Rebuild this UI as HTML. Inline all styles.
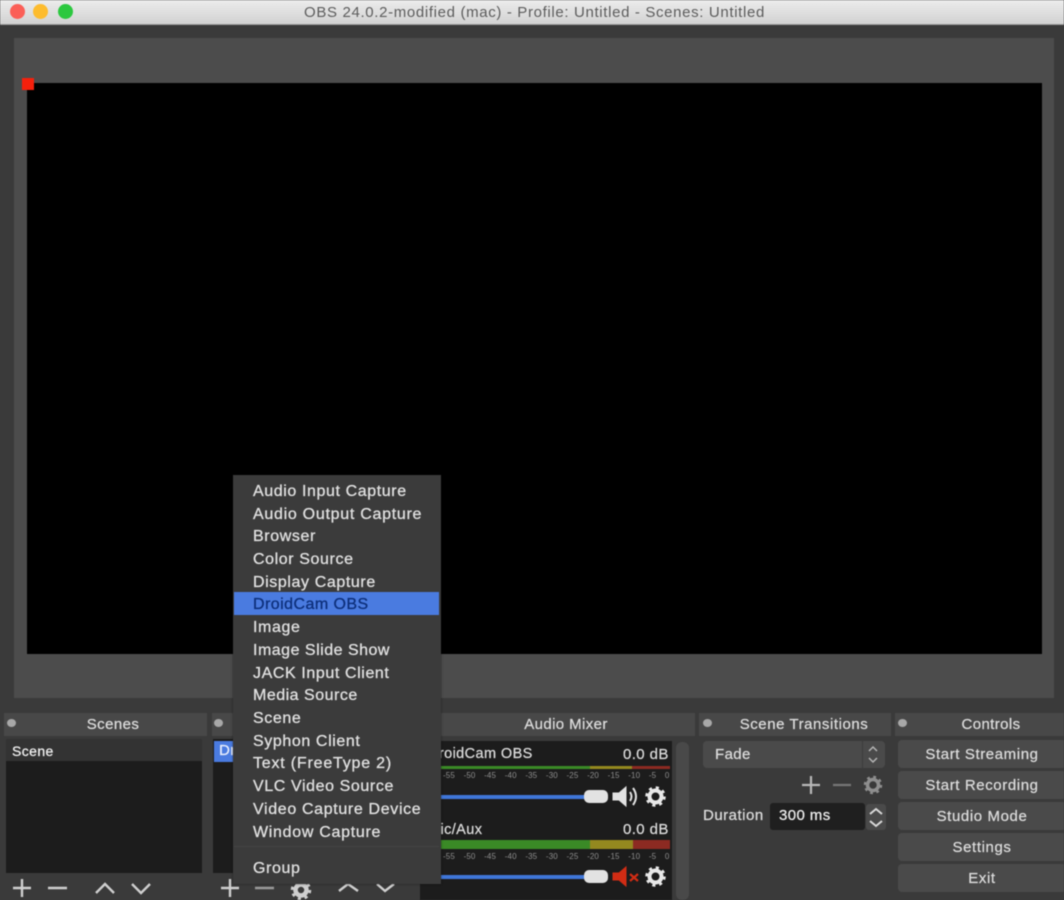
<!DOCTYPE html>
<html><head><meta charset="utf-8"><style>
html,body{margin:0;padding:0;background:#3a3a3a}
#r{position:relative;width:1064px;height:900px;overflow:hidden;background:#3a3a3a;font-family:"Liberation Sans",sans-serif;color:#dcdcdc;font-size:16px;filter:blur(.5px)}
#r div,#r span.t{position:absolute}
.t{white-space:nowrap;line-height:20px;letter-spacing:.4px;-webkit-text-stroke:.25px currentColor}
.c{text-align:center}
.dock{background:#484848;top:713px;height:23px}
.list{background:#1c1c1c}
.btn{left:898px;width:168px;height:28px;background:#4a4a4a;border-radius:4px;text-align:center;line-height:30px;letter-spacing:.6px;-webkit-text-stroke:.25px currentColor}
.dot{width:15px;height:15px;border-radius:50%;top:4px}
.m{left:253px;white-space:nowrap;line-height:20px;letter-spacing:.6px;color:#e0e0e0;-webkit-text-stroke:.3px currentColor}
svg{position:absolute;overflow:visible}
.s{-webkit-text-stroke:0;font-size:8px;line-height:11px;letter-spacing:.1px;word-spacing:6.4px;color:#8c8c8c;left:443px;width:232px}
</style></head><body><div id="r">
<div style="left:0;top:0;width:1064px;height:24px;background:linear-gradient(#ececec,#d2d2d2);border-bottom:1px solid #9a9a9a"></div>
<div class="dot" style="left:10px;background:#fb5f57"></div>
<div class="dot" style="left:33px;background:#fdbc2e"></div>
<div class="dot" style="left:58px;background:#2bc83f"></div>
<div class="t c" style="left:0;width:1069px;top:3px;color:#5c5c5c;font-size:15px;letter-spacing:.65px;-webkit-text-stroke:0">OBS 24.0.2-modified (mac) - Profile: Untitled - Scenes: Untitled</div>

<div style="left:14px;top:38px;width:1040px;height:660px;background:#4c4c4c"></div>
<div style="left:27px;top:83px;width:1015px;height:571px;background:#000"></div>
<div style="left:22px;top:78px;width:12px;height:12px;background:#f5200c"></div>

<div class="dock" style="left:4px;width:203px"></div>
<div class="dock" style="left:212px;width:200px"></div>
<div class="dock" style="left:420px;width:275px"></div>
<div class="dock" style="left:699px;width:192px"></div>
<div class="dock" style="left:895px;width:169px"></div>
<div style="left:7px;top:719px;width:9px;height:8px;border-radius:50%;background:#a8a8a8"></div>
<div style="left:214px;top:719px;width:9px;height:8px;border-radius:50%;background:#a8a8a8"></div>
<div style="left:703px;top:719px;width:9px;height:8px;border-radius:50%;background:#a8a8a8"></div>
<div style="left:898px;top:719px;width:9px;height:8px;border-radius:50%;background:#a8a8a8"></div>
<div class="t c" style="left:4px;width:218px;top:715px;font-size:15px">Scenes</div>
<div class="t c" style="left:420px;width:292px;top:715px;font-size:15px">Audio Mixer</div>
<div class="t c" style="left:699px;width:210px;top:715px;font-size:15px;letter-spacing:.55px">Scene Transitions</div>
<div class="t c" style="left:895px;width:192px;top:715px;font-size:15px">Controls</div>

<div class="list" style="left:6px;top:739px;width:196px;height:134px"></div>
<div style="left:6px;top:739px;width:196px;height:22px;background:#333"></div>
<div class="t" style="left:12px;top:741px;font-size:14px;color:#f2f2f2">Scene</div>
<div class="list" style="left:213px;top:739px;width:195px;height:134px"></div>
<div style="left:214px;top:741px;width:22px;height:21px;background:#4a7be0"></div>
<div class="t" style="left:219px;top:741px;font-size:15px;color:#e8eefc">Dr</div>

<svg style="left:0;top:873px" width="420" height="27" fill="none" stroke="#cfcfcf" stroke-width="2.4">
<path d="M22 6V24M13 15H31M48 15H67M96 20L105 11L114 20M132 11L141 20L150 11"/>
<path d="M230 6V24M221 15H239"/>
<path d="M255 15H274" stroke="#9a9a9a"/>
<path d="M339 18L348 11L358 18M377 11L385 18L394 11"/>
<circle cx="301" cy="17" r="5.500" stroke-width="4.500"/>
<circle cx="301" cy="17" r="8.500" stroke-width="3.500" stroke-dasharray="3 3.670"/>
</svg>

<!-- audio mixer -->
<div class="list" style="left:420px;top:741px;width:252px;height:159px"></div>
<div style="left:676px;top:742px;width:13px;height:158px;border-radius:6px;background:#494949"></div>
<div class="t" style="left:428px;top:744px;font-size:14.5px">DroidCam OBS</div>
<div class="t" style="left:623px;top:745px;font-size:15px">0.0 dB</div>
<div style="left:440px;top:766px;width:150px;height:3px;background:#3a8a26"></div>
<div style="left:590px;top:766px;width:42px;height:3px;background:#94891f"></div>
<div style="left:632px;top:766px;width:38px;height:3px;background:#8c2a22"></div>
<div class="t s" style="top:770px">-55 -50 -45 -40 -35 -30 -25 -20 -15 -10 -5 0</div>
<div style="left:440px;top:795px;width:150px;height:4px;background:#3f76d8"></div>
<div style="left:584px;top:790px;width:24px;height:13px;border-radius:5px;background:#e2e2e2"></div>
<svg style="left:612px;top:785px" width="28" height="24" fill="#e2e2e2" stroke="#e2e2e2">
<path d="M1 8H7L14 2V21L7 15H1Z"/><path d="M18 7Q21 11.500 18 16M21 3Q27 11.500 21 20" fill="none" stroke-width="2"/></svg>
<svg style="left:645px;top:786px" width="21" height="21" fill="none" stroke="#e8e8e8"><circle cx="10.500" cy="10.500" r="6" stroke-width="4"/><circle cx="10.500" cy="10.500" r="8.500" stroke-width="3.500" stroke-dasharray="3 3.670"/></svg>

<div class="t" style="left:428px;top:820px;font-size:14.5px">Mic/Aux</div>
<div class="t" style="left:623px;top:820px;font-size:15px">0.0 dB</div>
<div style="left:440px;top:840px;width:150px;height:9px;background:#3a8a26"></div>
<div style="left:590px;top:840px;width:43px;height:9px;background:#94891f"></div>
<div style="left:633px;top:840px;width:37px;height:9px;background:#8c2a22"></div>
<div class="t s" style="top:851px">-55 -50 -45 -40 -35 -30 -25 -20 -15 -10 -5 0</div>
<div style="left:440px;top:875px;width:150px;height:4px;background:#3f76d8"></div>
<div style="left:584px;top:870px;width:24px;height:13px;border-radius:5px;background:#e2e2e2"></div>
<svg style="left:612px;top:865px" width="28" height="24" fill="#d12c14" stroke="#d12c14">
<path d="M1 8H7L14 2V21L7 15H1Z"/><path d="M18 9L26 16M26 9L18 16" stroke-width="2.200"/></svg>
<svg style="left:645px;top:866px" width="21" height="21" fill="none" stroke="#e8e8e8"><circle cx="10.500" cy="10.500" r="6" stroke-width="4"/><circle cx="10.500" cy="10.500" r="8.500" stroke-width="3.500" stroke-dasharray="3 3.670"/></svg>

<!-- transitions -->
<div style="left:703px;top:741px;width:182px;height:27px;border-radius:4px;background:#4a4a4a"></div>
<div style="left:862px;top:741px;width:1px;height:27px;background:#3c3c3c"></div>
<div class="t" style="left:715px;top:745px;font-size:15px">Fade</div>
<svg style="left:865px;top:744px" width="16" height="22" fill="none" stroke="#b5b5b5" stroke-width="1.500"><path d="M4 7L8 3L12 7M4 14L8 18L12 14"/></svg>
<svg style="left:800px;top:775px" width="85" height="20" fill="none" stroke="#b8b8b8" stroke-width="2.200"><path d="M11 1V19M2 10H20"/><path d="M33 10H51" stroke="#777"/><circle cx="73" cy="10" r="5.500" stroke-width="3.500" stroke="#8e8e8e"/><circle cx="73" cy="10" r="8" stroke-width="2.500" stroke="#8e8e8e" stroke-dasharray="2.800 3.480"/></svg>
<div class="t" style="left:703px;top:806px;font-size:15px;letter-spacing:.5px">Duration</div>
<div style="left:770px;top:803px;width:95px;height:27px;border-radius:3px;background:#1f1f1f"></div>
<div class="t" style="left:779px;top:806px;font-size:15px;color:#eee">300 ms</div>
<div style="left:866px;top:804px;width:20px;height:26px;border-radius:3px;background:#4a4a4a"></div>
<svg style="left:866px;top:804px" width="20" height="26" fill="none" stroke="#d8d8d8" stroke-width="2"><path d="M4 10L10 5L16 10M4 17L10 22L16 17"/></svg>

<!-- controls -->
<div class="btn" style="top:740px;font-size:15px">Start Streaming</div>
<div class="btn" style="top:771px;font-size:15px">Start Recording</div>
<div class="btn" style="top:802px;font-size:15px">Studio Mode</div>
<div class="btn" style="top:833px;font-size:15px">Settings</div>
<div class="btn" style="top:864px;font-size:15px">Exit</div>

<!-- menu -->
<div style="left:233px;top:475px;width:208px;height:409px;background:#3b3b3b;box-shadow:0 0 2px rgba(0,0,0,.5)"></div>
<div style="left:234px;top:592px;width:205px;height:23px;background:#4a7be0"></div>
<div class="m" style="top:482px">Audio Input Capture</div>
<div class="m" style="top:505px;letter-spacing:.72px">Audio Output Capture</div>
<div class="m" style="top:527px">Browser</div>
<div class="m" style="top:550px">Color Source</div>
<div class="m" style="top:573px">Display Capture</div>
<div class="m" style="top:595px;color:#0d2f7a;letter-spacing:.45px">DroidCam OBS</div>
<div class="m" style="top:618px">Image</div>
<div class="m" style="top:641px;letter-spacing:.5px">Image Slide Show</div>
<div class="m" style="top:664px">JACK Input Client</div>
<div class="m" style="top:686px;letter-spacing:.5px">Media Source</div>
<div class="m" style="top:709px">Scene</div>
<div class="m" style="top:732px">Syphon Client</div>
<div class="m" style="top:754px;letter-spacing:.8px">Text (FreeType 2)</div>
<div class="m" style="top:777px">VLC Video Source</div>
<div class="m" style="top:800px;letter-spacing:.65px">Video Capture Device</div>
<div class="m" style="top:823px;letter-spacing:.7px">Window Capture</div>
<div style="left:234px;top:846px;width:205px;height:1px;background:#444"></div>
<div class="m" style="top:859px">Group</div>
</div></body></html>
